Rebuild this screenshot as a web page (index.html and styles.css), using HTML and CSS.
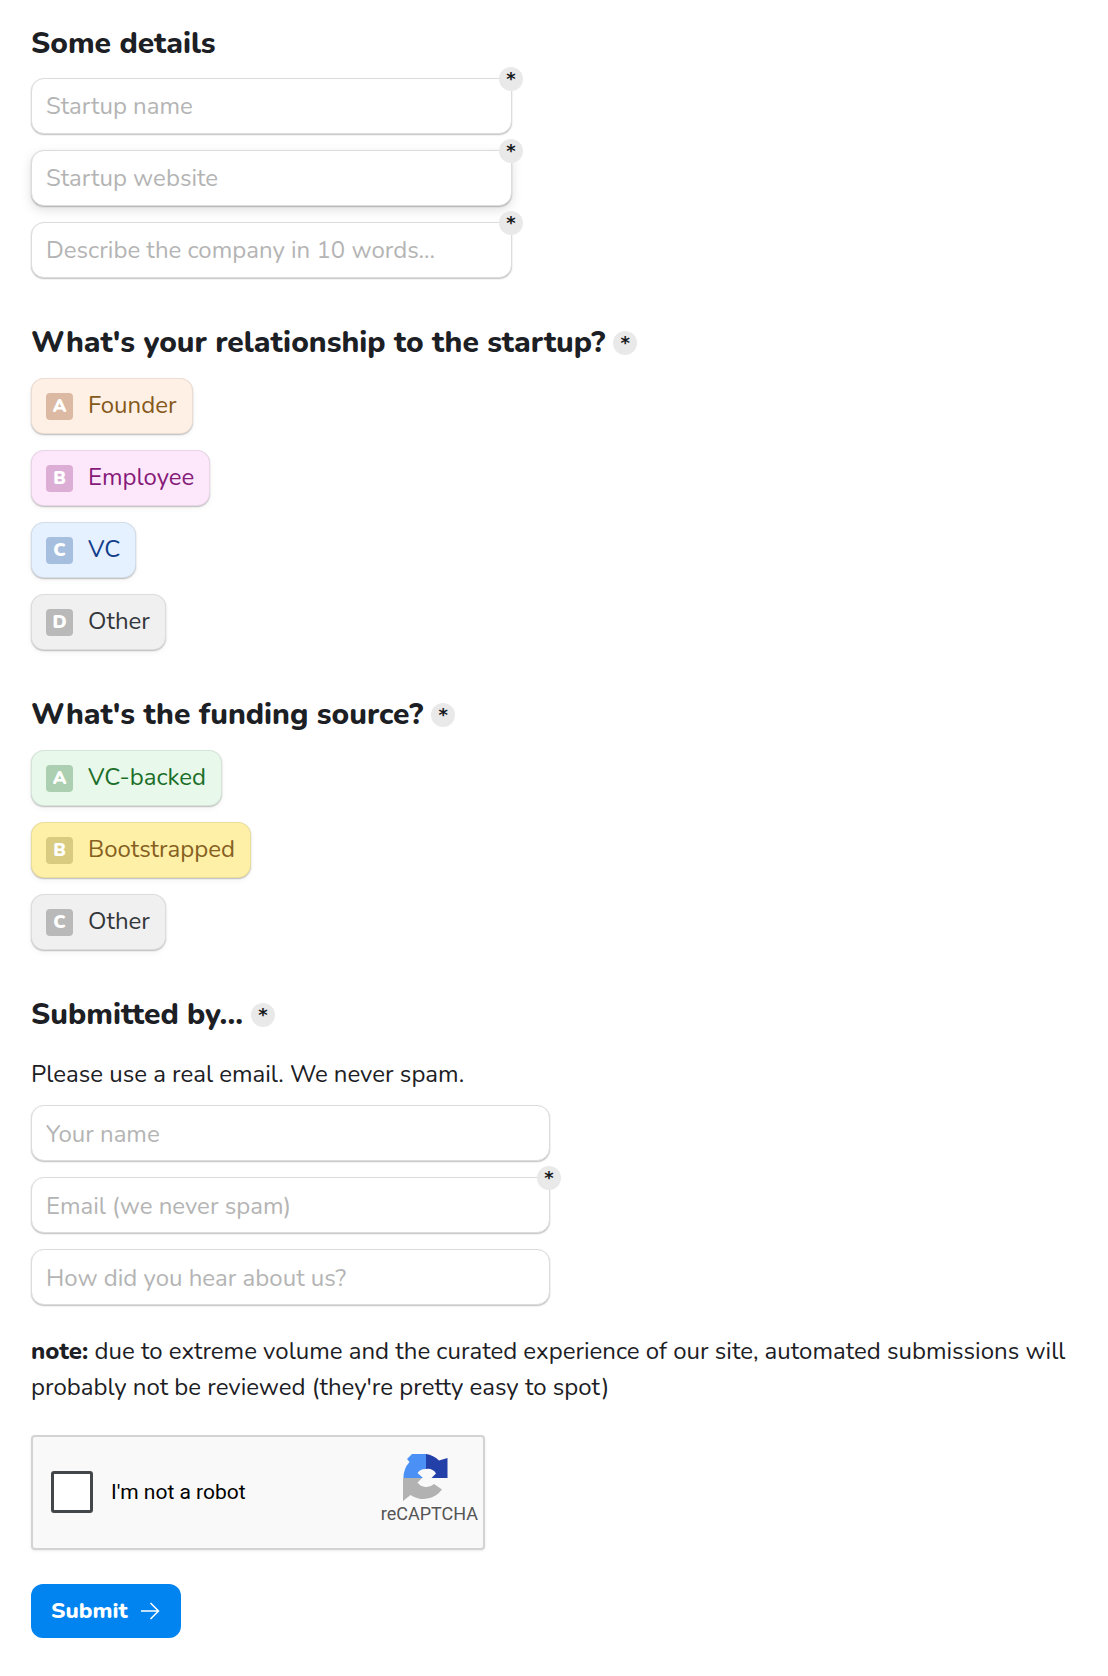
FILE: index.html
```html
<!DOCTYPE html>
<html lang="en">
<head>
<meta charset="utf-8">
<title>Submit a startup</title>
<link rel="stylesheet" href="styles.css">
</head>
<body>
<form class="form">
  <h2 class="title title-first">Some details</h2>
  <div class="fields fields-short">
    <div class="field"><input class="input" placeholder="Startup name"><span class="req req-corner">*</span></div>
    <div class="field"><input class="input input-hover" placeholder="Startup website"><span class="req req-corner">*</span></div>
    <div class="field"><input class="input" placeholder="Describe the company in 10 words..."><span class="req req-corner">*</span></div>
  </div>

  <h2 class="title">What's your relationship to the startup? <span class="req">*</span></h2>
  <div class="choices">
    <div class="choice orange"><span class="key">A</span>Founder</div>
    <div class="choice pink"><span class="key">B</span>Employee</div>
    <div class="choice blue"><span class="key">C</span>VC</div>
    <div class="choice gray"><span class="key">D</span>Other</div>
  </div>

  <h2 class="title">What's the funding source? <span class="req">*</span></h2>
  <div class="choices">
    <div class="choice green"><span class="key">A</span>VC-backed</div>
    <div class="choice yellow"><span class="key">B</span>Bootstrapped</div>
    <div class="choice gray"><span class="key">C</span>Other</div>
  </div>

  <h2 class="title">Submitted by... <span class="req">*</span></h2>
  <p class="hint">Please use a real email. We never spam.</p>
  <div class="fields fields-long">
    <div class="field"><input class="input input-low" placeholder="Your name"></div>
    <div class="field"><input class="input input-low" placeholder="Email (we never spam)"><span class="req req-corner">*</span></div>
    <div class="field"><input class="input input-low" placeholder="How did you hear about us?"></div>
  </div>

  <p class="note"><strong>note:</strong> due to extreme volume and the curated experience of our site, automated submissions will probably not be reviewed (they're pretty easy to spot)</p>

  <div class="captcha">
    <span class="captcha-box"></span>
    <span class="captcha-label">I'm not a robot</span>
    <div class="captcha-brand">
      <svg class="captcha-logo" viewBox="0 0 46 47" width="46" height="47" aria-hidden="true">
        <path fill="#b2b2b2" d="M0 24H19L14.500 28.500A11 11 0 0 0 31 30L39 35.500A23 23 0 0 1 7.500 41L0 47Z"/>
        <path fill="#4a90f5" d="M9 0H23V15A9.500 9.500 0 0 0 14.500 19L20 24H0.500A23 23 0 0 1 6.500 8L4 5Z"/>
        <path fill="#2340a8" d="M23 0A24 24 0 0 1 36 6.500L44.500 4V24H28.500L33 19.500A10 10 0 0 0 23 15Z"/>
      </svg>
      <span class="captcha-name">reCAPTCHA</span>
    </div>
  </div>

  <button class="submit" type="button">Submit
    <svg class="arrow" viewBox="0 0 20 18" width="20" height="18" aria-hidden="true"><path d="M1 9H18.500M10.500 1L18.500 9L10.500 17"/></svg>
  </button>
</form>
</body>
</html>
```

FILE: styles.css
```css
* { box-sizing: border-box; }

html, body { margin: 0; background: #fff; }

body {
  font-family: "Nunito", "Lato", "Noto Sans", sans-serif;
  font-size: 24px;
  line-height: 36px;
  color: #1c2024;
}

.form {
  padding: 26px 30px 38px 31px;
  display: flex;
  flex-direction: column;
  align-items: flex-start;
}

.title {
  margin: 47px 0 0;
  font-size: 30px;
  line-height: 36px;
  font-weight: 800;
  color: #1c2024;
  display: flex;
  align-items: center;
  gap: 8px;
}

.title-first { margin-top: 0; }

.req {
  display: block;
  width: 24px;
  height: 24px;
  border-radius: 50%;
  background: #e9e9e9;
  color: #15181c;
  font-size: 18px;
  line-height: 23px;
  font-weight: 700;
  text-align: center;
  font-family: "DejaVu Sans", sans-serif;
}

.req-corner {
  position: absolute;
  top: -11px;
  right: -11px;
}

.fields {
  display: flex;
  flex-direction: column;
  gap: 16px;
}

.fields-short { width: 481px; margin-top: 16px; }
.fields-long { width: 519px; margin-top: 13px; }

.field { position: relative; }

.input {
  display: block;
  width: 100%;
  height: 56px;
  padding: 0 14px;
  border: 1.500px solid #dcdcdc;
  border-radius: 13px;
  background: #fff;
  font: inherit;
  color: #1c2024;
  outline: none;
  box-shadow: 0 1px 1.500px rgba(0, 0, 0, 0.25);
}

.input-low { padding-top: 2px; }

.input::placeholder { color: #b4b4b4; opacity: 1; }

.input-hover { box-shadow: 0 1px 1.500px rgba(0, 0, 0, 0.25), 0 4px 12px rgba(0, 0, 0, 0.12); }

.choices {
  display: flex;
  flex-direction: column;
  align-items: flex-start;
  gap: 16px;
  margin-top: 17px;
}

.choice {
  display: flex;
  align-items: center;
  height: 56px;
  padding: 0 15px 3px 14px;
  border-radius: 13px;
  border: 1px solid rgba(0, 0, 0, 0.08);
  box-shadow: 0 1px 1.500px rgba(0, 0, 0, 0.25), 0 3px 6px rgba(0, 0, 0, 0.04);
}

.key {
  width: 27px;
  height: 27px;
  margin: 3px 15px 0 0;
  border-radius: 4px;
  color: #fff;
  font-size: 18px;
  line-height: 26px;
  font-weight: 900;
  text-align: center;
}

.orange { background: #fff0e6; color: #85591a; }
.orange .key { background: #dcb9a3; }
.pink { background: #fde8fb; color: #861a78; }
.pink .key { background: #dcaed6; }
.blue { background: #e6f1ff; color: #123d8a; }
.blue .key { background: #a6bfdf; }
.gray { background: #f0f0f0; color: #33363a; }
.gray .key { background: #b9b9b9; }
.green { background: #e8f9ec; color: #1b6e28; }
.green .key { background: #abcfb0; }
.yellow { background: #fff0a8; color: #85601f; }
.yellow .key { background: #d9cb80; }

.hint { margin: 23px 0 0; }

.note { margin: 28px 0 0; }
.note strong { font-weight: 800; }

.captcha {
  display: flex;
  align-items: center;
  width: 454px;
  height: 115px;
  margin-top: 30px;
  border: 2px solid #d3d3d3;
  border-radius: 4px;
  background: #f9f9f9;
  box-shadow: 0 1px 3px rgba(0, 0, 0, 0.08);
  font-family: "Roboto", sans-serif;
}

.captcha-box {
  width: 42px;
  height: 42px;
  margin: 0 0 2px 18px;
  border: 3px solid #44474a;
  border-radius: 3px;
  background: #fff;
}

.captcha-label {
  margin: 0 0 2px 18px;
  font-size: 21px;
  color: #000;
}

.captcha-brand {
  margin: 0 5px 4px auto;
  display: flex;
  flex-direction: column;
}

.captcha-logo { display: block; margin-left: 22px; }

.captcha-name {
  font-size: 18px;
  line-height: 26px;
  color: #555;
}

.submit {
  display: flex;
  align-items: center;
  gap: 12px;
  width: 150px;
  height: 54px;
  margin-top: 34px;
  padding: 0 0 0 20px;
  border: 0;
  border-radius: 12px;
  background: #0284f0;
  color: #fff;
  font: inherit;
  font-size: 22.500px;
  font-weight: 800;
}

.arrow { fill: none; stroke: #fff; stroke-width: 1.500; }
```
